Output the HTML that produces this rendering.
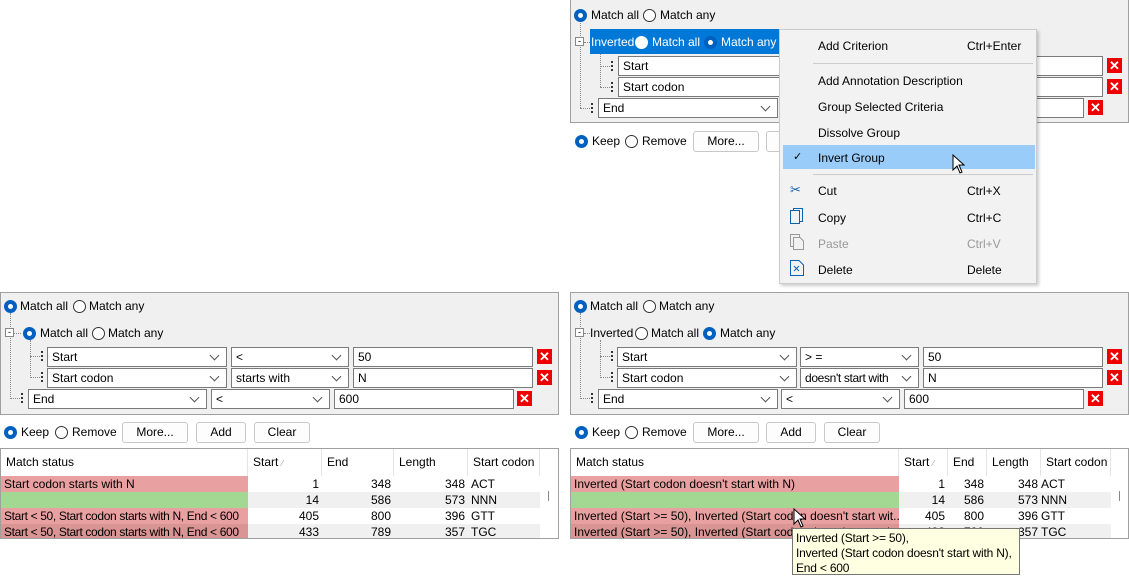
<!DOCTYPE html><html><head><style>
*{box-sizing:border-box;margin:0;padding:0}
body{width:1129px;height:575px;background:#fff;position:relative;overflow:hidden;font:12px "Liberation Sans",sans-serif;color:#000}
.a{position:absolute}
.fp{background:#f0f0f0;border:1px solid #a0a0a0}
.dd,.tx{position:absolute;height:20px;background:#fff;border:1px solid #7a7a7a;padding:2px 0 0 4px;white-space:nowrap;overflow:hidden}
.dd::after{content:"";position:absolute;right:8px;top:4px;width:6px;height:6px;border-right:1px solid #555;border-bottom:1px solid #555;transform:rotate(45deg)}
.x{position:absolute;width:15px;height:15px;background:#e00;color:#fff;font-weight:bold;font-size:13px;line-height:15px;text-align:center}
.r{position:absolute;width:13px;height:13px;border-radius:50%;border:1px solid #333;background:#fff}
.r.on{border:4px solid #0060c0}
.t{position:absolute;white-space:nowrap}
.b{position:absolute;height:21px;border:1px solid #c8c8c8;border-radius:3px;background:#fdfdfd;text-align:center;line-height:19px}
.gr{position:absolute;width:3px;height:10px;border-left:2px dotted #333}
.dl{position:absolute;border-left:1px dotted #888}
.dh{position:absolute;border-top:1px dotted #888}
.tb{position:absolute;background:#fff;border:1px solid #a0a0a0;overflow:hidden}
.c{position:absolute;height:16px;line-height:16px;white-space:nowrap;overflow:hidden;padding:0 3px}
.h{position:absolute;height:27px;line-height:27px;top:0;padding-left:5px;border-right:1px solid #e5e5e5;white-space:nowrap}
.n{text-align:right}
.mi{position:absolute;left:38px;white-space:nowrap}
.ms{position:absolute;left:187px;white-space:nowrap}
.sq{letter-spacing:-0.35px}
</style></head><body>

<!-- LEFT BOTTOM PANEL -->
<div class="a fp" style="left:0;top:292px;width:559px;height:123px"></div>
<div class="r on" style="left:4px;top:300px"></div><div class="t" style="left:20px;top:299px">Match all</div>
<div class="r" style="left:73px;top:300px"></div><div class="t" style="left:89px;top:299px">Match any</div>
<div class="dl" style="left:10px;top:313px;height:86px"></div>
<div class="a" style="left:5px;top:328px;width:9px;height:9px;border:1px solid #888;background:#fff;font-size:9px;line-height:6px;text-align:center">-</div>
<div class="dh" style="left:14px;top:333px;width:7px"></div>
<div class="r on" style="left:23px;top:327px"></div><div class="t" style="left:40px;top:326px">Match all</div>
<div class="r" style="left:92px;top:327px"></div><div class="t" style="left:108px;top:326px">Match any</div>
<div class="dl" style="left:30px;top:340px;height:38px"></div>
<div class="dh" style="left:30px;top:356px;width:10px"></div><div class="gr" style="left:41px;top:351px"></div>
<div class="dh" style="left:30px;top:377px;width:10px"></div><div class="gr" style="left:41px;top:372px"></div>
<div class="dh" style="left:10px;top:398px;width:10px"></div><div class="gr" style="left:21px;top:393px"></div>
<div class="dd" style="left:47px;top:347px;width:180px">Start</div>
<div class="dd" style="left:231px;top:347px;width:118px">&lt;</div>
<div class="tx" style="left:353px;top:347px;width:180px">50</div><div class="x" style="left:537px;top:349px">✕</div>
<div class="dd" style="left:47px;top:368px;width:180px">Start codon</div>
<div class="dd" style="left:231px;top:368px;width:118px">starts with</div>
<div class="tx" style="left:353px;top:368px;width:180px">N</div><div class="x" style="left:537px;top:370px">✕</div>
<div class="dd" style="left:28px;top:389px;width:179px">End</div>
<div class="dd" style="left:211px;top:389px;width:119px">&lt;</div>
<div class="tx" style="left:334px;top:389px;width:180px">600</div><div class="x" style="left:517px;top:391px">✕</div>
<div class="r on" style="left:4px;top:426px"></div><div class="t" style="left:21px;top:425px">Keep</div>
<div class="r" style="left:55px;top:426px"></div><div class="t" style="left:72px;top:425px">Remove</div>
<div class="b" style="left:122px;top:422px;width:66px">More...</div>
<div class="b" style="left:196px;top:422px;width:50px">Add</div>
<div class="b" style="left:254px;top:422px;width:56px">Clear</div>
<div class="tb" style="left:0;top:448px;width:559px;height:91px">
 <div class="h" style="left:0;width:247px">Match status</div><div class="h" style="left:247px;width:74px">Start <span style="font-size:8px;color:#999">⁄</span></div><div class="h" style="left:321px;width:72px">End</div><div class="h" style="left:393px;width:74px">Length</div><div class="h" style="left:467px;width:72px">Start codon</div>
 <div class="a" style="left:547px;top:42px;width:1px;height:10px;background:#888"></div>
 <div class="c" style="left:0;top:27px;width:247px;background:#e9a0a0">Start codon starts with N</div>
 <div class="c" style="left:0;top:43px;width:247px;background:#a2d891"></div>
 <div class="c sq" style="left:0;top:59px;width:247px;background:#e9a0a0">Start &lt; 50, Start codon starts with N, End &lt; 600</div>
 <div class="c sq" style="left:0;top:75px;width:247px;background:#d99494">Start &lt; 50, Start codon starts with N, End &lt; 600</div>
 <div class="a" style="left:247px;top:43px;width:292px;height:16px;background:#f0f0f0"></div>
 <div class="a" style="left:247px;top:75px;width:292px;height:16px;background:#f0f0f0"></div>
 <div class="c n" style="left:247px;top:27px;width:74px">1</div><div class="c n" style="left:321px;top:27px;width:72px">348</div><div class="c n" style="left:393px;top:27px;width:74px">348</div><div class="c" style="left:467px;top:27px;width:72px">ACT</div>
 <div class="c n" style="left:247px;top:43px;width:74px">14</div><div class="c n" style="left:321px;top:43px;width:72px">586</div><div class="c n" style="left:393px;top:43px;width:74px">573</div><div class="c" style="left:467px;top:43px;width:72px">NNN</div>
 <div class="c n" style="left:247px;top:59px;width:74px">405</div><div class="c n" style="left:321px;top:59px;width:72px">800</div><div class="c n" style="left:393px;top:59px;width:74px">396</div><div class="c" style="left:467px;top:59px;width:72px">GTT</div>
 <div class="c n" style="left:247px;top:75px;width:74px">433</div><div class="c n" style="left:321px;top:75px;width:72px">789</div><div class="c n" style="left:393px;top:75px;width:74px">357</div><div class="c" style="left:467px;top:75px;width:72px">TGC</div>
</div>

<!-- RIGHT BOTTOM PANEL -->
<div class="a fp" style="left:570px;top:292px;width:559px;height:123px"></div>
<div class="r on" style="left:574px;top:300px"></div><div class="t" style="left:590px;top:299px">Match all</div>
<div class="r" style="left:643px;top:300px"></div><div class="t" style="left:659px;top:299px">Match any</div>
<div class="dl" style="left:580px;top:313px;height:86px"></div>
<div class="a" style="left:575px;top:328px;width:9px;height:9px;border:1px solid #888;background:#fff;font-size:9px;line-height:6px;text-align:center">-</div>
<div class="dh" style="left:584px;top:333px;width:6px"></div>
<div class="t" style="left:590px;top:326px">Inverted</div>
<div class="r" style="left:635px;top:327px"></div><div class="t" style="left:651px;top:326px">Match all</div>
<div class="r on" style="left:703px;top:327px"></div><div class="t" style="left:720px;top:326px">Match any</div>
<div class="dl" style="left:600px;top:340px;height:38px"></div>
<div class="dh" style="left:600px;top:356px;width:10px"></div><div class="gr" style="left:611px;top:351px"></div>
<div class="dh" style="left:600px;top:377px;width:10px"></div><div class="gr" style="left:611px;top:372px"></div>
<div class="dh" style="left:580px;top:398px;width:10px"></div><div class="gr" style="left:591px;top:393px"></div>
<div class="dd" style="left:617px;top:347px;width:180px">Start</div>
<div class="dd" style="left:800px;top:347px;width:119px">&gt; =</div>
<div class="tx" style="left:923px;top:347px;width:180px">50</div><div class="x" style="left:1107px;top:349px">✕</div>
<div class="dd" style="left:617px;top:368px;width:180px">Start codon</div>
<div class="dd sq" style="left:800px;top:368px;width:119px">doesn't start with</div>
<div class="tx" style="left:923px;top:368px;width:180px">N</div><div class="x" style="left:1107px;top:370px">✕</div>
<div class="dd" style="left:598px;top:389px;width:180px">End</div>
<div class="dd" style="left:781px;top:389px;width:119px">&lt;</div>
<div class="tx" style="left:904px;top:389px;width:180px">600</div><div class="x" style="left:1088px;top:391px">✕</div>
<div class="r on" style="left:575px;top:426px"></div><div class="t" style="left:592px;top:425px">Keep</div>
<div class="r" style="left:625px;top:426px"></div><div class="t" style="left:642px;top:425px">Remove</div>
<div class="b" style="left:693px;top:422px;width:66px">More...</div>
<div class="b" style="left:766px;top:422px;width:50px">Add</div>
<div class="b" style="left:824px;top:422px;width:56px">Clear</div>
<div class="tb" style="left:570px;top:448px;width:559px;height:91px">
 <div class="h" style="left:0;width:328px">Match status</div><div class="h" style="left:328px;width:49px">Start <span style="font-size:8px;color:#999">⁄</span></div><div class="h" style="left:377px;width:39px">End</div><div class="h" style="left:416px;width:54px">Length</div><div class="h" style="left:470px;width:70px">Start codon</div>
 <div class="a" style="left:548px;top:42px;width:1px;height:10px;background:#888"></div>
 <div class="c" style="left:0;top:27px;width:328px;background:#e9a0a0">Inverted (Start codon doesn't start with N)</div>
 <div class="c" style="left:0;top:43px;width:328px;background:#a2d891"></div>
 <div class="c" style="left:0;top:59px;width:328px;background:#e9a0a0">Inverted (Start &gt;= 50), Inverted (Start codon doesn't start wit...</div>
 <div class="c" style="left:0;top:75px;width:328px;background:#d99494">Inverted (Start &gt;= 50), Inverted (Start codon doesn't start wit...</div>
 <div class="a" style="left:328px;top:43px;width:212px;height:16px;background:#f0f0f0"></div>
 <div class="a" style="left:328px;top:75px;width:212px;height:16px;background:#f0f0f0"></div>
 <div class="c n" style="left:328px;top:27px;width:49px">1</div><div class="c n" style="left:377px;top:27px;width:39px">348</div><div class="c n" style="left:416px;top:27px;width:54px">348</div><div class="c" style="left:467px;top:27px;width:70px">ACT</div>
 <div class="c n" style="left:328px;top:43px;width:49px">14</div><div class="c n" style="left:377px;top:43px;width:39px">586</div><div class="c n" style="left:416px;top:43px;width:54px">573</div><div class="c" style="left:467px;top:43px;width:70px">NNN</div>
 <div class="c n" style="left:328px;top:59px;width:49px">405</div><div class="c n" style="left:377px;top:59px;width:39px">800</div><div class="c n" style="left:416px;top:59px;width:54px">396</div><div class="c" style="left:467px;top:59px;width:70px">GTT</div>
 <div class="c n" style="left:328px;top:75px;width:49px">433</div><div class="c n" style="left:377px;top:75px;width:39px">789</div><div class="c n" style="left:416px;top:75px;width:54px">357</div><div class="c" style="left:467px;top:75px;width:70px">TGC</div>
</div>
<div class="a" style="left:792px;top:528px;width:228px;height:47px;background:#ffffe1;border:1px solid #767676;padding:2px 3px;line-height:15px;white-space:nowrap;letter-spacing:-0.2px">Inverted (Start &gt;= 50),<br>Inverted (Start codon doesn't start with N),<br>End &lt; 600</div>
<svg class="a" style="left:793px;top:508px" width="14" height="20"><path d="M1 1 L1 16 L5 12 L8 19 L10 18 L7 11 L12 11 Z" fill="#fff" stroke="#000"/></svg>

<!-- TOP RIGHT PANEL -->
<div class="a fp" style="left:570px;top:0;width:559px;height:123px;border-top:none"></div>
<div class="r on" style="left:574px;top:9px"></div><div class="t" style="left:591px;top:8px">Match all</div>
<div class="r" style="left:643px;top:9px"></div><div class="t" style="left:660px;top:8px">Match any</div>
<div class="dl" style="left:580px;top:23px;height:85px"></div>
<div class="a" style="left:590px;top:29px;width:190px;height:25px;background:#0078d7"></div>
<div class="a" style="left:575px;top:37px;width:9px;height:9px;border:1px solid #888;background:#fff;font-size:9px;line-height:6px;text-align:center">-</div>
<div class="dh" style="left:584px;top:42px;width:6px"></div>
<div class="t" style="left:591px;top:35px;color:#fff">Inverted</div>
<div class="r" style="left:635px;top:36px;border-color:#fff"></div><div class="t" style="left:652px;top:35px;color:#fff">Match all</div>
<div class="r" style="left:704px;top:36px;border:4px solid #0060c0;background:#fff"></div><div class="t" style="left:721px;top:35px;color:#fff">Match any</div>
<div class="dl" style="left:600px;top:54px;height:33px"></div>
<div class="dh" style="left:600px;top:66px;width:10px"></div><div class="gr" style="left:611px;top:61px"></div>
<div class="dh" style="left:600px;top:87px;width:10px"></div><div class="gr" style="left:611px;top:82px"></div>
<div class="dh" style="left:580px;top:108px;width:10px"></div><div class="gr" style="left:591px;top:103px"></div>
<div class="tx" style="left:618px;top:56px;width:485px">Start</div><div class="x" style="left:1107px;top:58px">✕</div>
<div class="tx" style="left:618px;top:77px;width:485px">Start codon</div><div class="x" style="left:1107px;top:79px">✕</div>
<div class="dd" style="left:598px;top:98px;width:180px">End</div>
<div class="tx" style="left:904px;top:98px;width:180px"></div><div class="x" style="left:1088px;top:100px">✕</div>
<div class="r on" style="left:575px;top:135px"></div><div class="t" style="left:592px;top:134px">Keep</div>
<div class="r" style="left:625px;top:135px"></div><div class="t" style="left:642px;top:134px">Remove</div>
<div class="b" style="left:693px;top:131px;width:66px">More...</div>
<div class="b" style="left:766px;top:131px;width:50px">Add</div>

<!-- CONTEXT MENU -->
<div class="a" style="left:779px;top:29px;width:258px;height:255px;background:#f2f2f2;border:1px solid #ccc;box-shadow:2px 2px 3px rgba(0,0,0,.2)">
 <div class="mi" style="top:9px">Add Criterion</div><div class="ms" style="top:9px">Ctrl+Enter</div>
 <div class="a" style="left:33px;top:33px;width:220px;height:1px;background:#ccc"></div>
 <div class="mi" style="top:44px">Add Annotation Description</div>
 <div class="mi" style="top:70px">Group Selected Criteria</div>
 <div class="mi" style="top:96px">Dissolve Group</div>
 <div class="a" style="left:3px;top:115px;width:252px;height:24px;background:#99ccf8"></div>
 <div class="a" style="left:13px;top:120px;font-size:11px">✓</div>
 <div class="mi" style="top:121px">Invert Group</div>
 <svg class="a" style="left:172px;top:124px" width="14" height="20"><path d="M1 1 L1 16 L5 12 L8 19 L10 18 L7 11 L12 11 Z" fill="#fff" stroke="#000"/></svg>
 <div class="a" style="left:33px;top:144px;width:220px;height:1px;background:#ccc"></div>
 <div class="a" style="left:10px;top:152px;color:#1060b0;font-size:13px">✂</div>
 <div class="mi" style="top:154px">Cut</div><div class="ms" style="top:154px">Ctrl+X</div>
 <svg class="a" style="left:10px;top:178px" width="14" height="16"><rect x="3.5" y="0.5" width="9" height="13" fill="none" stroke="#1060b0"/><rect x="0.5" y="2.5" width="9" height="13" fill="#f2f2f2" stroke="#1060b0"/></svg>
 <div class="mi" style="top:181px">Copy</div><div class="ms" style="top:181px">Ctrl+C</div>
 <svg class="a" style="left:10px;top:204px" width="14" height="16"><rect x="0.5" y="0.5" width="9" height="12" fill="none" stroke="#999"/><path d="M3.5 3.5 H10 L13.5 7 V15.5 H3.5 Z" fill="#f2f2f2" stroke="#999"/></svg>
 <div class="mi" style="top:207px;color:#999">Paste</div><div class="ms" style="top:207px;color:#999">Ctrl+V</div>
 <svg class="a" style="left:10px;top:230px" width="14" height="16"><path d="M0.5 0.5 H9 L13.5 5 V15.5 H0.5 Z" fill="none" stroke="#1060b0"/><path d="M4 6 L9 11 M9 6 L4 11" stroke="#1060b0"/></svg>
 <div class="mi" style="top:233px">Delete</div><div class="ms" style="top:233px">Delete</div>
</div>
</body></html>
